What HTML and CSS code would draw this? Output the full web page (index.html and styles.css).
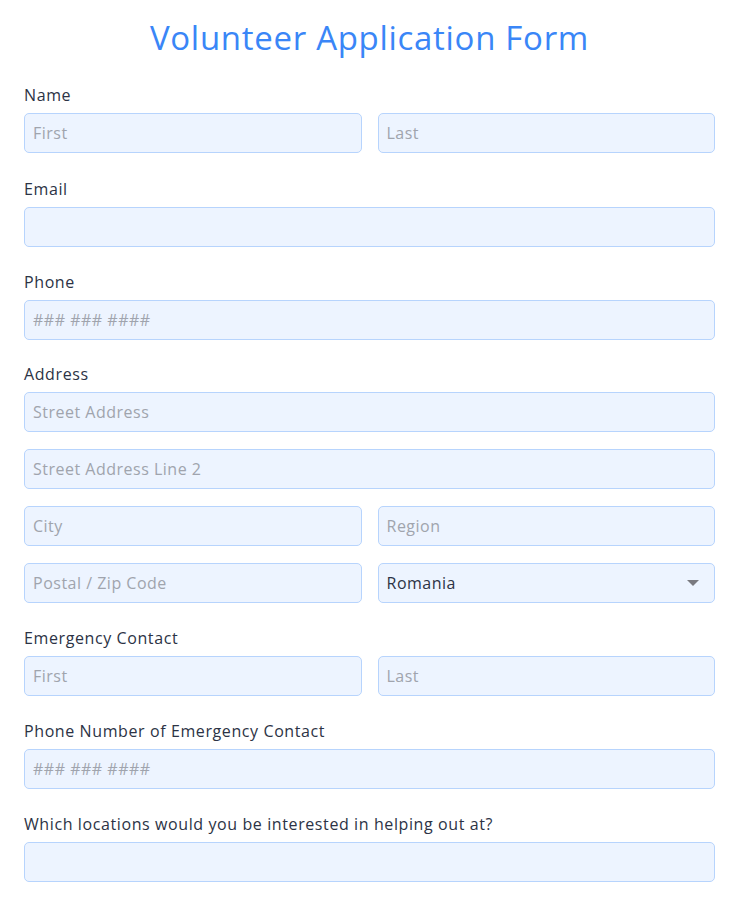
FILE: index.html
```html
<!DOCTYPE html>
<html lang="en">
<head>
<meta charset="utf-8">
<title>Volunteer Application Form</title>
<link rel="stylesheet" href="styles.css">
</head>
<body>
<form class="form">
  <h1 class="title">Volunteer Application Form</h1>

  <div class="field field-name">
    <label class="label">Name</label>
    <div class="row">
      <input class="input" type="text" placeholder="First">
      <input class="input" type="text" placeholder="Last">
    </div>
  </div>

  <div class="field">
    <label class="label">Email</label>
    <input class="input" type="email">
  </div>

  <div class="field field-phone">
    <label class="label">Phone</label>
    <input class="input" type="tel" placeholder="### ### ####">
  </div>

  <div class="field">
    <label class="label">Address</label>
    <div class="stack">
      <input class="input" type="text" placeholder="Street Address">
      <input class="input" type="text" placeholder="Street Address Line 2">
      <div class="row">
        <input class="input" type="text" placeholder="City">
        <input class="input" type="text" placeholder="Region">
      </div>
      <div class="row">
        <input class="input" type="text" placeholder="Postal / Zip Code">
        <div class="select-wrap">
          <select class="input select">
            <option>Romania</option>
          </select>
          <svg class="caret" width="12" height="6" viewBox="0 0 12 6"><path d="M0 0H12L6 6Z" fill="#7a7a80"/></svg>
        </div>
      </div>
    </div>
  </div>

  <div class="field">
    <label class="label">Emergency Contact</label>
    <div class="row">
      <input class="input" type="text" placeholder="First">
      <input class="input" type="text" placeholder="Last">
    </div>
  </div>

  <div class="field">
    <label class="label">Phone Number of Emergency Contact</label>
    <input class="input" type="tel" placeholder="### ### ####">
  </div>

  <div class="field">
    <label class="label">Which locations would you be interested in helping out at?</label>
    <input class="input" type="text">
  </div>
</form>
</body>
</html>
```

FILE: styles.css
```css
* { box-sizing: border-box; }

html, body {
  margin: 0;
  padding: 0;
  background: #ffffff;
}

body {
  font-family: "Open Sans", "Liberation Sans", sans-serif;
  color: #2c3345;
}

.form {
  display: flex;
  flex-direction: column;
  padding: 16px 25px 20px 24px;
}

.title {
  margin: 0 0 24px 0;
  text-align: center;
  font-weight: 400;
  font-size: 33px;
  letter-spacing: 0.7px;
  line-height: 44px;
  color: #3a86f7;
}

.field {
  display: flex;
  flex-direction: column;
  margin-bottom: 24px;
}

.field-name {
  margin-bottom: 25px;
}

.field-phone {
  margin-bottom: 23px;
}

.label {
  display: block;
  font-size: 16px;
  letter-spacing: 0.6px;
  line-height: 22px;
  margin-bottom: 7px;
  color: #2c3345;
}

.row {
  display: grid;
  grid-template-columns: 1fr 1fr;
  gap: 16px;
}

.stack {
  display: flex;
  flex-direction: column;
  gap: 17px;
}

.input {
  display: block;
  width: 100%;
  height: 40px;
  margin: 0;
  padding: 0 8px;
  border: 1px solid #b7d4fd;
  border-radius: 5px;
  background: #edf4ff;
  font-family: inherit;
  font-size: 16px;
  letter-spacing: 0.5px;
  color: #2c3345;
  outline: none;
}

.input::placeholder {
  color: #a0a4ad;
}

.select-wrap {
  position: relative;
}

.select {
  appearance: none;
  -webkit-appearance: none;
  padding-right: 32px;
}

.caret {
  position: absolute;
  right: 16px;
  top: 17px;
  pointer-events: none;
}
```
